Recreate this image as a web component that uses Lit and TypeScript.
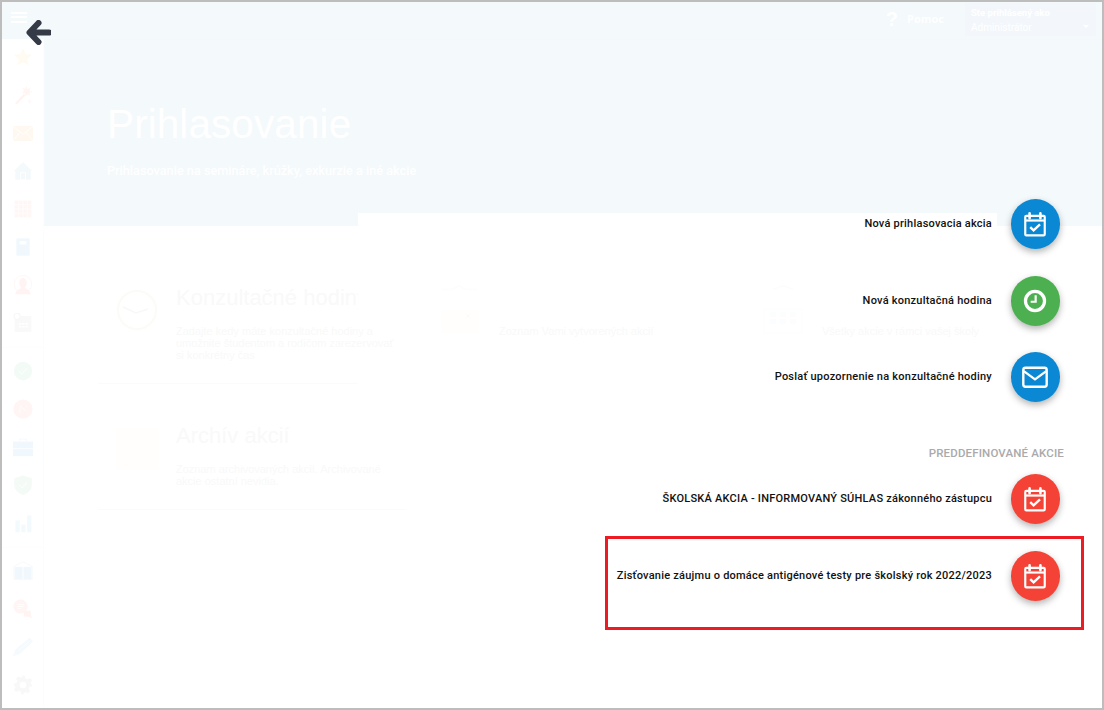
import { LitElement, html, css, svg } from "lit";
import { customElement } from "lit/decorators.js";

const calendar = svg`<path d="M4 4.5h16a1 1 0 0 1 1 1v16a1 1 0 0 1-1 1H4a1 1 0 0 1-1-1v-16a1 1 0 0 1 1-1z" fill="none" stroke="#fff" stroke-width="2"/><path d="M3 8.8h18" stroke="#fff" stroke-width="2"/><path d="M7 2.2v4.4M17 2.2v4.4" stroke="#fff" stroke-width="2.4" stroke-linecap="round"/><path d="M7.6 14.9l3.1 3 5.9-5.6" fill="none" stroke="#fff" stroke-width="2.2"/>`;
const clock = svg`<circle cx="12" cy="12" r="8.8" fill="none" stroke="#fff" stroke-width="3"/><path d="M12.6 6.8v5.9H8" fill="none" stroke="#fff" stroke-width="2"/>`;
const mail = svg`<rect x="1.2" y="3.5" width="21.6" height="17.5" rx="2" fill="none" stroke="#fff" stroke-width="2.2"/><path d="M1.6 6.6L12 14.2l10.4-7.6" fill="none" stroke="#fff" stroke-width="2.2"/>`;

const sideTop = [
  svg`<path d="M12 1.5l3.2 7 7.6.8-5.7 5.1 1.6 7.5-6.7-3.9-6.7 3.9 1.6-7.5L1.2 9.3l7.6-.8z" fill="#fffaea"/>`,
  svg`<path d="M2.5 22L13 10.5l2 2L4.5 23.5z" fill="#ffeeea"/><path d="M16 1l1.5 4 3.5-2-1.500 3.800 3.500 1-3.500 1.500 1 3.500-3.500-2-2 3-.5-4-4-.5 3-2.500-2-3.500 3.500 1.200z" fill="#fff0ec"/><path d="M20 17v5M17.500 19.500h5" stroke="#fff0ec"/>`,
  svg`<rect x="0" y="3.500" width="24" height="18" fill="#fff5e8"/><path d="M0 4l12 9.500L24 4M0 21.500l9-11M24 21.500l-9-11" fill="none" stroke="#fff" stroke-width="1"/>`,
  svg`<path d="M12 1.500L23 12h-1.800v10.500H2.800V12H1z" fill="#eef8f9"/><rect x="9" y="14" width="6" height="8.500" fill="none" stroke="#fff"/>`,
  svg`<rect x="2" y="2" width="20" height="20" fill="#fff2ef"/><path d="M2 7h20M2 12h20M2 17h20M7 2v20M12 2v20M17 2v20" stroke="#fff" stroke-width="1"/>`,
  svg`<rect x="4" y="1.500" width="16" height="21" rx="1.500" fill="#e9f5fd"/><rect x="8" y="5" width="8" height="4" fill="#fff"/>`,
  svg`<circle cx="12" cy="11" r="10.500" fill="none" stroke="#fff1ef"/><path d="M12 3.500a5 6 0 0 1 4.500 7c-.5 2.500-1.800 4-2.500 5 2 1.200 7 2 7 7.500H3c0-5.500 5-6.300 7-7.500-.7-1-2-2.500-2.500-5A5 6 0 0 1 12 3.500z" fill="#ffeeec"/>`,
  svg`<rect x="2" y="3.500" width="20" height="19" fill="#f6f6f6"/><path d="M7 12h3v2H7zM11 12h3v2h-3zM15 12h3v2h-3zM7 15.500h3v2H7zM11 15.500h3v2h-3zM15 15.500h3v2h-3z" fill="#fff"/><circle cx="5" cy="4" r="3.800" fill="#fff" stroke="#eee"/>`,
];
const sideMid = [
  svg`<circle cx="12" cy="12" r="11" fill="#ecf9f3"/><path d="M7 12l3.500 3.500L17 8.500" fill="none" stroke="#fff" stroke-width="1.200"/>`,
  svg`<circle cx="12" cy="12" r="11.500" fill="#fff0ed"/><path d="M8 17l1-9 6 6M15 8l2 2" fill="none" stroke="#fff" stroke-width="1"/>`,
  svg`<rect x="0" y="5.500" width="24" height="17.500" fill="#e9f5fd"/><path d="M8 5.500V2.500h8v3" fill="none" stroke="#eef7fc"/><path d="M0 14h24" stroke="#fff"/>`,
  svg`<path d="M12 .5l10.500 3.500v8c0 6-5 10-10.500 12C6.500 22 1.500 18 1.500 12V4z" fill="#edf9f3"/><path d="M7.500 12l3.500 3.500 6-7" fill="none" stroke="#fff" stroke-width="1.200"/>`,
  svg`<path d="M3 9h5v14H3zM10 14h5v9h-5zM17 3h5v20h-5z" fill="#ebf8fc"/>`,
];
const sideBottom = [
  svg`<path d="M12 1L23 6.500v15.500H1V6.500z" fill="none" stroke="#eef6fb"/><rect x="2" y="7" width="20" height="15" fill="#e9f5fd"/><path d="M12 7v15" stroke="#fff"/>`,
  svg`<circle cx="9" cy="9" r="8.500" fill="#fff0ed"/><path d="M5 6.500h8M5 9h8M5 11.500h5" stroke="#fff"/><path d="M13 14h8.500v6l2 3.500-5-2.500H13z" fill="#ffeeea"/>`,
  svg`<path d="M0 23l3-8L20 1l4 4.500L8 20z" fill="#eef7fc"/><path d="M7 16L20 5" stroke="#fff"/>`,
  svg`<path d="M10 1h4l.8 3.300 2.400 1 2.900-1.800 2.800 2.800-1.800 2.900 1 2.400L23 10.500v3l-3.100.7-1 2.400 1.800 2.900-2.800 2.800-2.900-1.800-2.400 1L14 23h-4l-.8-3.300-2.400-1-2.900 1.800-2.800-2.800 1.800-2.900-1-2.400L1 13.500v-3l3.300-.8 1-2.400-1.800-2.900 2.800-2.800 2.900 1.800 2.400-1z" fill="#f5f5f5"/><circle cx="12" cy="12" r="4" fill="#fff"/>`,
];

const cards = [
  { title: "Konzultačné hodiny", desc: "Zadajte kedy máte konzultačné hodiny a umožnite študentom a rodičom zarezervovať si konkrétny čas", rule: "short",
    icon: svg`<circle cx="20" cy="20" r="19" fill="none" stroke="#fdfbf6" stroke-width="2"/><path d="M6 17l13 6 12-4" fill="none" stroke="#f8f8f8" stroke-width="1.500"/>` },
  { title: "", desc: "Zoznam Vami vytvorených akcií", rule: "none",
    icon: svg`<path d="M1 -1h12l6-3 6 3h12" fill="none" stroke="#fcfcfc"/><rect x="1" y="20" width="38" height="23" fill="#fffefd"/><path d="M26 24l4 4M30 24l-4 4" stroke="#fafafa"/>` },
  { title: "", desc: "Všetky akcie v rámci vašej školy", rule: "none",
    icon: svg`<path d="M10 -1l10-3 10 3" fill="none" stroke="#fcfcfc"/><rect x="1" y="19" width="38" height="24" fill="#fff" stroke="#fcfdfe"/><path d="M7 22h6v5H7zM17 22h6v5h-6zM27 22h6v5h-6zM7 29h6v5H7zM17 29h6v5h-6zM27 29h6v5h-6z" fill="#fbfdfe"/>` },
  { title: "Archív akcií", desc: "Zoznam archivovaných akcií. Archivované akcie ostatní nevidia.", rule: "",
    icon: svg`<rect x="-1" y="0" width="43" height="42" fill="#fffefc"/>` },
];

const actions = [
  { label: "Nová prihlasovacia akcia", tone: "blue", icon: calendar },
  { label: "Nová konzultačná hodina", tone: "green", icon: clock },
  { label: "Poslať upozornenie na konzultačné hodiny", tone: "blue", icon: mail },
];
const presets = [
  { label: "ŠKOLSKÁ AKCIA - INFORMOVANÝ SÚHLAS zákonného zástupcu", tone: "red", icon: calendar },
  { label: "Zisťovanie záujmu o domáce antigénové testy pre školský rok 2022/2023", tone: "red", icon: calendar },
];

@customElement("app-root")
export class AppRoot extends LitElement {
  static styles = css`
    :host { display: block; width: 1104px; height: 710px; font-family: "Liberation Sans", Arial, sans-serif; }
    * { box-sizing: border-box; }
    .frame { position: relative; width: 1104px; height: 710px; border: 2px solid #bdbdbd; background: #fff; overflow: hidden; display: grid; grid-template-rows: 37px 1fr; }
    .top { background: #f4f9fc; display: flex; align-items: center; padding-left: 9px; }
    .burger { width: 16px; display: flex; flex-direction: column; gap: 2.500px; margin-top: -7px; }
    .burger i { display: block; height: 2px; background: #fff; }
    .help { margin-left: auto; display: flex; align-items: center; gap: 9px; color: #fff; font: 700 11px "Open Sans", sans-serif; margin-top: -5px; }
    .q { font: 700 20px "Liberation Sans", sans-serif; margin-top: 2px; }
    .user { width: 131px; height: 33px; margin: -3px 6px 0 21px; background: #f3f7fb; color: #fff; padding: 2px 6px; position: relative; font: 10px/15px Roboto, sans-serif; }
    .user b { display: block; font-size: 9.500px; }
    .caret { position: absolute; right: 7px; top: 22px; border: 3.500px solid transparent; border-top-color: #fff; }
    .body { display: grid; grid-template-columns: 42px 1fr; min-height: 0; }
    .side { display: flex; flex-direction: column; align-items: center; border-right: 1px solid #fdfdfd; padding-top: 8px; }
    .group { display: flex; flex-direction: column; align-items: center; gap: 18px; }
    .group + .group { border-top: 1px solid #fdfdfd; width: 100%; padding-top: 13px; margin-top: 14px; }
    .side svg { width: 20px; height: 20px; display: block; opacity: .6; }
    .main { min-width: 0; }
    .hero { height: 187px; background: #f4f9fc; color: #fff; padding: 62px 0 0 63px; border-top: 1px solid #f3f8fb; }
    .hero h1 { margin: 0; font-weight: 400; font-size: 40.700px; line-height: 44px; }
    .hero p { margin: 15px 0 0; font: 500 12.700px/20px Roboto, sans-serif; }
    .cards { position: relative; z-index: 2; display: grid; grid-template-columns: repeat(3, 307px); gap: 0 16px; padding: 56px 0 0 54px; }
    .card { height: 126px; }
    .card-in { display: flex; gap: 19px; padding-left: 19px; height: 101px; }
    .card:nth-child(n+4) .card-in { padding-top: 12px; }
    .card-icon { width: 40px; height: 40px; flex: none; margin-top: 8px; display: block; overflow: visible; }
    .title { font-size: 22px; line-height: 30px; height: 30px; color: #f9f9f9; white-space: nowrap; overflow: hidden; width: 182px; margin-top: 1px; }
    .desc { width: 225px; font-size: 11px; line-height: 12px; color: #f9f9f9; margin-top: 12px; }
    .rule { height: 1px; background: #fbfbfb; }
    .rule.short { width: 260px; }
    .rule.none { background: none; }
    .sheet { position: absolute; left: 356px; top: 211px; width: 639px; bottom: 0; background: #fff; z-index: 1; }
    .dial { position: absolute; right: 42px; top: 197px; z-index: 3; display: flex; flex-direction: column; align-items: flex-end; }
    .row { display: flex; align-items: center; gap: 18.500px; margin-bottom: 26.500px; color: #111; font: 500 11px/14px Roboto, sans-serif; letter-spacing: .23px; white-space: nowrap; }
    .fab { width: 49.500px; height: 50px; border-radius: 50%; display: flex; align-items: center; justify-content: center; box-shadow: 0 3px 7px rgba(0,0,0,.3); }
    .fab svg { width: 26px; height: 26px; display: block; }
    .blue { background: #0a88d3; }
    .green { background: #4caf50; }
    .red { background: #f44336; }
    .heading { margin: 17.500px -4px 14px 0; color: #aaa; font: 500 11.500px/14px Roboto, sans-serif; letter-spacing: .15px; }
    .mark { position: absolute; left: 603px; top: 534px; width: 479px; height: 94px; border: 3px solid #ed1c24; z-index: 4; pointer-events: none; }
    .back { position: absolute; left: 24px; top: 18px; width: 25px; height: 25px; z-index: 5; }
  `;

  private fab(a: { label: string; tone: string; icon: unknown }) {
    return html`<div class="row"><span>${a.label}</span><div class="fab ${a.tone}"><svg viewBox="0 0 24 24">${a.icon}</svg></div></div>`;
  }

  private icons(list: unknown[]) {
    return html`<div class="group">${list.map((i) => html`<svg viewBox="0 0 24 24">${i}</svg>`)}</div>`;
  }

  render() {
    return html`
      <div class="frame">
        <div class="top">
          <div class="burger"><i></i><i></i><i></i></div>
          <div class="help"><span class="q">?</span><span>Pomoc</span></div>
          <div class="user"><b>Ste prihlásený ako</b>Administrátor<i class="caret"></i></div>
        </div>
        <div class="body">
          <nav class="side">${this.icons(sideTop)}${this.icons(sideMid)}${this.icons(sideBottom)}</nav>
          <main class="main">
            <section class="hero">
              <h1>Prihlasovanie</h1>
              <p>Prihlasovanie na semináre, krúžky, exkurzie a iné akcie</p>
            </section>
            <section class="cards">
              ${cards.map((c) => html`<article class="card">
                <div class="card-in">
                  <svg class="card-icon" viewBox="0 0 40 40">${c.icon}</svg>
                  <div>
                    <div class="title">${c.title}</div>
                    <div class="desc">${c.desc}</div>
                  </div>
                </div>
                <div class="rule ${c.rule}"></div>
              </article>`)}
            </section>
          </main>
        </div>
        <div class="sheet"></div>
        <div class="dial">
          ${actions.map((a) => this.fab(a))}
          <div class="heading">PREDDEFINOVANÉ AKCIE</div>
          ${presets.map((a) => this.fab(a))}
        </div>
        <div class="mark"></div>
        <svg class="back" viewBox="0 0 25 25"><path d="M12.500 3L3.500 12.500l9 9.500M4 12.500h19" fill="none" stroke="#343a46" stroke-width="6" stroke-linecap="round" stroke-linejoin="round"/></svg>
      </div>
    `;
  }
}
